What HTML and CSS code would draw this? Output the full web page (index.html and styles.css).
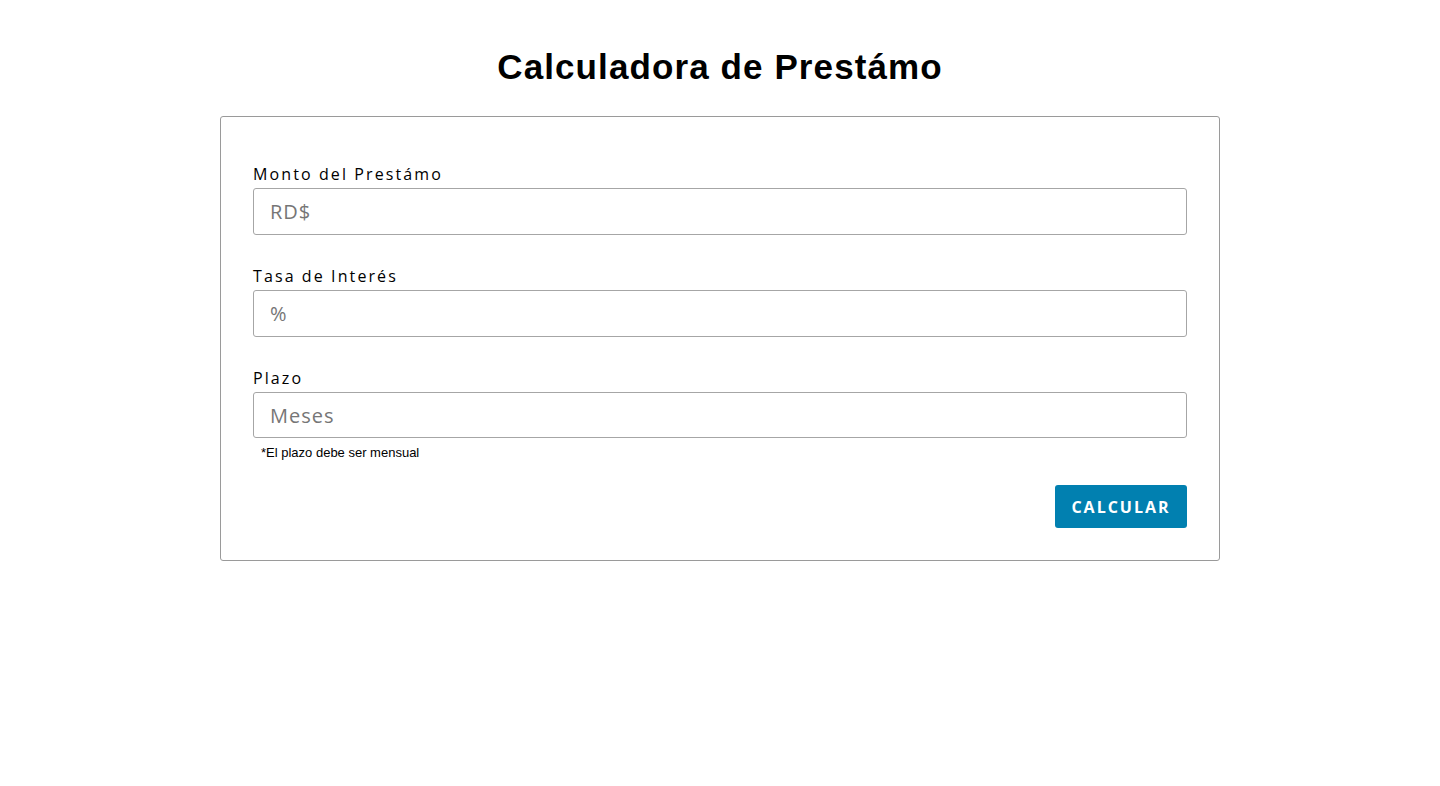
FILE: index.html
```html
<!DOCTYPE html>
<html lang="es">
<head>
<meta charset="utf-8">
<title>Calculadora de Prestámo</title>
<link rel="stylesheet" href="styles.css">
</head>
<body>
<main class="page">
  <h1 class="title">Calculadora de Prestámo</h1>
  <form class="card">
    <div class="field">
      <label class="label" for="monto">Monto del Prestámo</label>
      <input class="input" id="monto" type="text" placeholder="RD$">
    </div>
    <div class="field">
      <label class="label" for="tasa">Tasa de Interés</label>
      <input class="input" id="tasa" type="text" placeholder="%">
    </div>
    <div class="field field-last">
      <label class="label" for="plazo">Plazo</label>
      <input class="input input-short" id="plazo" type="text" placeholder="Meses">
      <small class="note">*El plazo debe ser mensual</small>
    </div>
    <div class="actions">
      <button class="btn" type="button">CALCULAR</button>
    </div>
  </form>
</main>
</body>
</html>
```
FILE: styles.css
```css
* { box-sizing: border-box; }
html, body { margin: 0; padding: 0; background: #fff; }
body { font-family: "Open Sans", "Noto Sans", sans-serif; color: #000; }
.page {
  display: flex;
  flex-direction: column;
  align-items: center;
  padding-top: 44px;
}
.title {
  margin: 0 0 26px;
  font-family: "Liberation Sans", Arial, sans-serif;
  font-weight: 700;
  font-size: 35px;
  line-height: 46px;
  letter-spacing: 1.1px;
}
.card {
  width: 1000px;
  border: 1px solid #9a9a9a;
  border-radius: 3px;
  padding: 46px 32px 32px;
  display: flex;
  flex-direction: column;
}
.field {
  display: flex;
  flex-direction: column;
  margin-bottom: 30px;
}
.field-last { margin-bottom: 24px; }
.label {
  font-size: 16px;
  line-height: 22px;
  letter-spacing: 2.1px;
  margin-bottom: 3px;
}
.input {
  height: 47px;
  border: 1px solid #a6a6a6;
  border-radius: 3px;
  padding: 0 16px;
  font-family: "Open Sans", sans-serif;
  font-size: 20px;
  letter-spacing: 1px;
  color: #333;
}
.input-short { height: 46px; }
.input::placeholder { color: #767676; }
.note {
  font-family: "Liberation Sans", Arial, sans-serif;
  font-size: 13px;
  line-height: 16px;
  margin-top: 7px;
  padding-left: 8px;
}
.actions {
  display: flex;
  justify-content: flex-end;
}
.btn {
  width: 132px;
  height: 43px;
  border: 0;
  border-radius: 3px;
  background: #0180b0;
  color: #fff;
  font-family: "Open Sans", sans-serif;
  font-weight: 700;
  font-size: 16px;
  letter-spacing: 2px;
}
```
